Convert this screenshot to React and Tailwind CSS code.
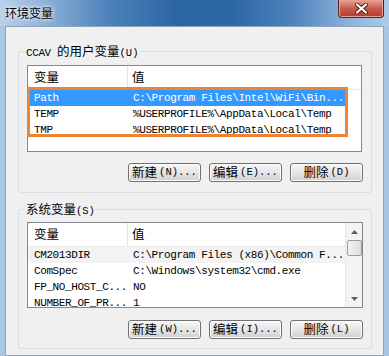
import React from 'react';

const cjk = { fontFamily: '"Noto Sans CJK SC", "Liberation Sans", sans-serif' };

const userVars = [
  ['Path', 'C:\\Program Files\\Intel\\WiFi\\Bin...'],
  ['TEMP', '%USERPROFILE%\\AppData\\Local\\Temp'],
  ['TMP', '%USERPROFILE%\\AppData\\Local\\Temp'],
];

const sysVars = [
  ['CM2013DIR', 'C:\\Program Files (x86)\\Common F...'],
  ['ComSpec', 'C:\\Windows\\system32\\cmd.exe'],
  ['FP_NO_HOST_C...', 'NO'],
  ['NUMBER_OF_PR...', '1'],
];

function Btn({ label, keyChar, dots = true }) {
  return (
    <button className="h-[19px] w-[73px] rounded-[3px] border border-[#707070] bg-gradient-to-b from-[#f6f6f6] via-[#e6e6e6] to-[#d0d0d0] shadow-[inset_0_0_0_1px_#fcfcfc] flex items-center justify-center text-[12px] leading-none text-black">
      <span className="text-[12.5px]" style={cjk}>{label}</span>
      <span className="ml-[2px] font-['Liberation_Mono',monospace] text-[10.5px]">({keyChar}){dots ? '...' : ''}</span>
    </button>
  );
}

function Row({ name, value, selected, hover }) {
  return (
    <div
      className={
        'flex h-[16px] items-center w-[317px] font-[\'Liberation_Mono\',monospace] text-[11px] tracking-[-0.4px] ' +
        (selected ? 'bg-[#3399ff] text-white' : hover ? 'bg-[#f3f3f3] text-black' : 'text-black')
      }
    >
      <div className="w-[100px] pl-[6px] whitespace-nowrap overflow-hidden">{name}</div>
      <div className="pl-[5px] whitespace-nowrap">{value}</div>
    </div>
  );
}

function Header() {
  return (
    <div className="flex h-[24px] items-center bg-white border-b border-[#eaeaea] text-[12.5px] text-black" style={cjk}>
      <div className="w-[100px] h-full flex items-center pl-[6px] border-r border-[#e2e2e2]">变量</div>
      <div className="pl-[4px]">值</div>
    </div>
  );
}

function Scrollbar() {
  return (
    <div className="w-[17px] h-full bg-[#f4f4f4] border-l border-[#e8e8e8] flex flex-col items-center">
      <div className="h-[17px] flex items-center justify-center">
        <svg width="7" height="4" viewBox="0 0 7 4"><path d="M0 4 L3.5 0 L7 4 Z" fill="#606060" /></svg>
      </div>
      <div className="w-[15px] h-[16px] rounded-[2px] border border-[#9a9a9a] bg-gradient-to-r from-[#f3f3f3] to-[#dcdcdc]" />
      <div className="flex-1" />
      <div className="h-[17px] flex items-center justify-center">
        <svg width="7" height="4" viewBox="0 0 7 4"><path d="M0 0 L3.5 4 L7 0 Z" fill="#606060" /></svg>
      </div>
    </div>
  );
}

export default function App() {
  return (
    <div className="w-[389px] h-[356px] overflow-hidden bg-[#a9c6e2] relative flex flex-col">
      {/* title bar */}
      <div className="h-[26px] flex items-center pl-[5px] bg-[linear-gradient(90deg,#b9d1ea_0%,#8cb0d6_12%,#4c82bb_28%,#2c66a3_45%,#2d68a5_60%,#4d82bc_75%,#8db3da_90%,#b0cce8_100%)]">
        <span className="text-[12px] text-black [text-shadow:0_0_6px_#fff,0_0_3px_#fff]" style={cjk}>环境变量</span>
      </div>
      <div className="absolute left-[338px] top-0 w-[46px] h-[18px] rounded-b-[4px] border border-t-0 border-[#5a1f1f] bg-gradient-to-b from-[#e3a394] via-[#c85a4a] to-[#b83a2c] shadow-[inset_0_0_0_1px_#e8a29a] flex items-center justify-center">
        <svg width="13" height="11" viewBox="0 0 13 11">
          <path d="M2 1.5 L11 9.5 M11 1.5 L2 9.5" stroke="#4a1a14" strokeWidth="4" strokeLinecap="round" />
          <path d="M2 1.5 L11 9.5 M11 1.5 L2 9.5" stroke="#ffffff" strokeWidth="2.2" strokeLinecap="round" />
        </svg>
      </div>

      {/* client area */}
      <div className="flex-1 ml-[5px] mr-[5px] bg-[#f0f0f0] border border-[#8da6c0] pl-[12px] pt-[16px]">
        <fieldset className="w-[354px] border border-[#d5dfe5] rounded-[3px] px-[8px] pt-[6px] pb-[10px]">
          <legend className="ml-[-2px] px-[1px] h-[16px] leading-[16px] text-[12px] text-black">
            <span className="font-['Liberation_Mono',monospace] text-[11px] tracking-[-0.4px]">CCAV </span>
            <span className="text-[12.5px]" style={cjk}>的用户变量</span>
            <span className="font-['Liberation_Mono',monospace] text-[10.5px]">(U)</span>
          </legend>
          <div className="relative h-[87px] w-[335px] border border-[#828790] bg-white">
            <Header />
            {userVars.map(([n, v], i) => (
              <Row key={n} name={n} value={v} selected={i === 0} />
            ))}
            <div className="absolute left-[-1px] top-[21px] w-[321px] h-[50px] border-[3px] border-[#ee8433]" />
          </div>
          <div className="mt-[11px] flex justify-end gap-[8px]">
            <Btn label="新建" keyChar="N" />
            <Btn label="编辑" keyChar="E" />
            <Btn label="删除" keyChar="D" dots={false} />
          </div>
        </fieldset>

        <fieldset className="mt-[8px] w-[354px] border border-[#d5dfe5] rounded-[3px] px-[8px] pt-[5px] pb-[9px]">
          <legend className="ml-[-2px] px-[1px] h-[16px] leading-[16px] text-[12px] text-black">
            <span className="text-[12.5px]" style={cjk}>系统变量</span>
            <span className="font-['Liberation_Mono',monospace] text-[10.5px]">(S)</span>
          </legend>
          <div className="h-[86px] w-[336px] border border-[#828790] bg-white flex overflow-hidden">
            <div className="flex-1 overflow-hidden">
              <Header />
              {sysVars.map(([n, v], i) => (
                <Row key={n} name={n} value={v} hover={i === 0} />
              ))}
            </div>
            <Scrollbar />
          </div>
          <div className="mt-[12px] flex justify-end gap-[8px]">
            <Btn label="新建" keyChar="W" />
            <Btn label="编辑" keyChar="I" />
            <Btn label="删除" keyChar="L" dots={false} />
          </div>
        </fieldset>
      </div>
    </div>
  );
}
